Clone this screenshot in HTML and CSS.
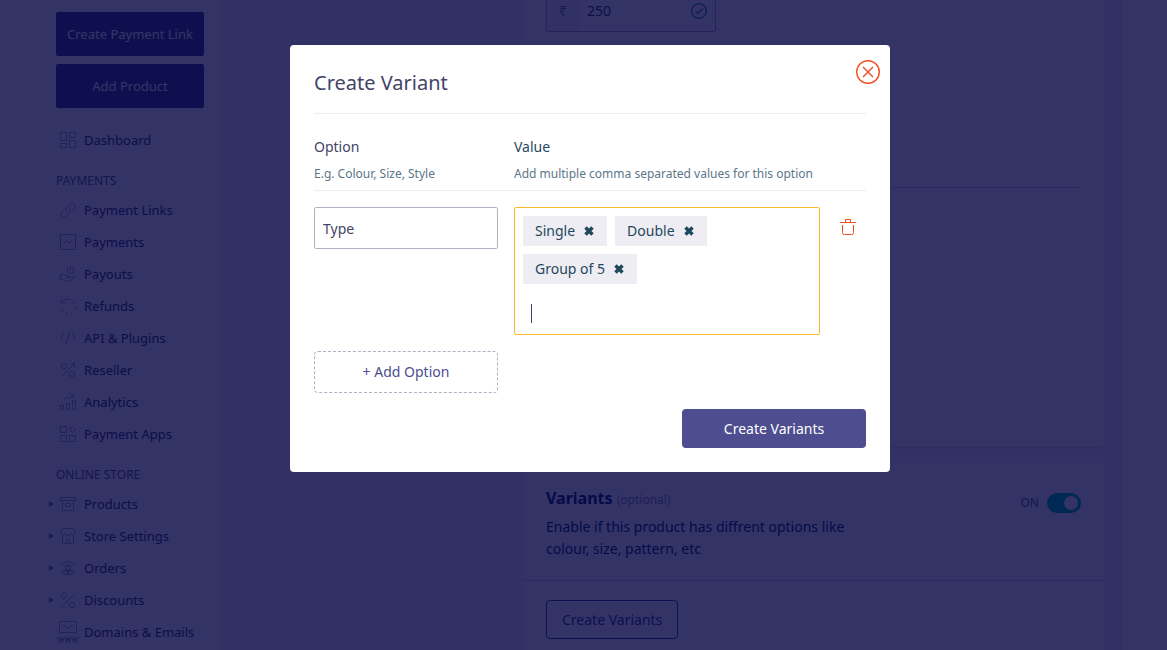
FILE: index.html
```html
<!DOCTYPE html>
<html lang="en">
<head>
<meta charset="utf-8">
<title>Create Variant</title>
<link rel="stylesheet" href="styles.css">
</head>
<body>
<div class="app">
  <aside class="sidebar">
    <div class="actions">
      <button class="action" type="button">Create Payment Link</button>
      <button class="action" type="button">Add Product</button>
    </div>
    <nav class="nav">
      <a class="item" href="#"><span class="caret"></span><svg class="icon" viewBox="0 0 16 16"><path d="M.5.5h6v8h-6zM9.500.5h6v5h-6zM.5 11.500h6v4h-6zM9.500 8.500h6v7h-6z"/></svg><span>Dashboard</span></a>
      <h2 class="group">PAYMENTS</h2>
      <a class="item" href="#"><span class="caret"></span><svg class="icon" viewBox="0 0 16 16"><path d="M6.500 9.500a3 3 0 0 1 0-4l3.800-3.800a2.800 2.800 0 0 1 4 4L11.500 8.500M9.500 6.500a3 3 0 0 1 0 4l-3.800 3.800a2.800 2.800 0 0 1-4-4L4.500 7.500"/></svg><span>Payment Links</span></a>
      <a class="item" href="#"><span class="caret"></span><svg class="icon" viewBox="0 0 16 16"><path d="M.5.5h15v15H.5zM3.500 10l3-3.500 3 2.500 3-3"/></svg><span>Payments</span></a>
      <a class="item" href="#"><span class="caret"></span><svg class="icon" viewBox="0 0 16 16"><circle cx="10.500" cy="4" r="3.500"/><path d="M10.500 2.500v3M.5 8.500v5h2c2 1.500 5 2.500 7 1.500l5.500-3.500c.8-1-.3-2-1.500-1.500L10 11.500H6h3.500c1-1 0-2-1-2H6c-1-1.200-3-1.500-5.500-1"/></svg><span>Payouts</span></a>
      <a class="item" href="#"><span class="caret"></span><svg class="icon" viewBox="0 0 16 16"><path d="M1 .8v4h4M1.500 4.500a7.300 7.300 0 0 1 10-2.500"/><path d="M13 3a7.300 7.300 0 1 1-12 5" stroke-dasharray="3 3"/></svg><span>Refunds</span></a>
      <a class="item" href="#"><span class="caret"></span><svg class="icon" viewBox="0 0 16 16"><path d="M4 4L.7 7.800 4 11.500M12 4l3.300 3.800L12 11.500M10 1.500l-4 13"/></svg><span>API &amp; Plugins</span></a>
      <a class="item" href="#"><span class="caret"></span><svg class="icon" viewBox="0 0 16 16"><circle cx="4" cy="4" r="2.800"/><circle cx="12" cy="12" r="2.800"/><path d="M1.500 14.500L14.500 1.500M10.500 1.500h4v4"/></svg><span>Reseller</span></a>
      <a class="item" href="#"><span class="caret"></span><svg class="icon" viewBox="0 0 16 16"><path d="M.5 11.500h3v4h-3zM6.500 9.500h3v6h-3zM12.500 6.500h3v9h-3zM3.500 5.500l3-2.500 2.500 2 4-4M10.500.7h3v3"/></svg><span>Analytics</span></a>
      <a class="item" href="#"><span class="caret"></span><svg class="icon" viewBox="0 0 16 16"><path d="M.5.5h6v6h-6zM.5 9.500h6v6h-6zM9.500 9.500h6v6h-6zM12.500.5l3 3-3 3-3-3z"/></svg><span>Payment Apps</span></a>
      <h2 class="group">ONLINE STORE</h2>
      <a class="item" href="#"><span class="caret open"></span><svg class="icon" viewBox="0 0 16 16"><path d="M.5 1.500h15v3H.5zM2.500 4.500v10h11v-10M5.500 7.500h5v3h-5z"/></svg><span>Products</span></a>
      <a class="item" href="#"><span class="caret open"></span><svg class="icon" viewBox="0 0 16 16"><path d="M3 .5h10l2.500 4c0 3-3.500 3.500-4 1-.8 2.500-6.200 2.500-7 0C4 8 .5 7.500.5 4.500zM2.500 7.500v8h11v-8M6.500 15.500v-4h3v4"/></svg><span>Store Settings</span></a>
      <a class="item" href="#"><span class="caret open"></span><svg class="icon" viewBox="0 0 16 16"><path d="M.5 5L8 1l7.500 4M5.500 5.500h5v4h-5zM2.500 10.500h5v4h-5zM8.500 10.500h5v4h-5zM8 5.500v2M5 10.500v2M11 10.500v2"/></svg><span>Orders</span></a>
      <a class="item" href="#"><span class="caret open"></span><svg class="icon" viewBox="0 0 16 16"><circle cx="4" cy="3.500" r="2.700"/><circle cx="12" cy="13" r="2.700"/><path d="M1.500 15L14.500 1.500"/></svg><span>Discounts</span></a>
      <a class="item" href="#"><span class="caret"></span><svg class="icon wide" viewBox="0 0 22 22"><path d="M2.500.5h17v11h-17zM5.500 3.500L11 7.500l5.500-4"/><path stroke-width="1.300" d="M.7 16l1.600 5 1.600-4.500L5.500 21l1.600-5M8 16l1.600 5 1.400-4.500 1.400 4.500L14 16M15 16l1.600 5 1.500-4.500 1.500 4.500 1.600-5"/></svg><span>Domains &amp; Emails</span></a>
    </nav>
  </aside>
  <main class="main">
    <div class="cards">
      <section class="card price-card">
        <div class="price">
          <span class="currency">₹</span>
          <input class="amount" type="text" value="250" aria-label="Price">
          <svg class="check" viewBox="0 0 16 16"><circle cx="8" cy="8" r="7.300"/><path d="M4.500 8l2.500 2.500 4.500-5"/></svg>
        </div>
        <hr class="rule">
      </section>
      <section class="card">
        <div class="variants">
          <div class="about">
            <h3 class="heading">Variants <span class="optional">(optional)</span></h3>
            <p class="text">Enable if this product has diffrent options like colour, size, pattern, etc</p>
          </div>
          <label class="switch">ON <input class="toggle" type="checkbox" checked></label>
        </div>
        <div class="foot"><button class="outline" type="button">Create Variants</button></div>
      </section>
    </div>
  </main>
  <div class="gutter"></div>
</div>
<div class="overlay">
  <div class="modal" role="dialog" aria-labelledby="title">
    <button class="close" type="button" aria-label="Close"><svg viewBox="0 0 24 24"><circle cx="12" cy="12" r="11.300"/><path d="M7 7l10 10M17 7L7 17"/></svg></button>
    <h1 class="title" id="title">Create Variant</h1>
    <div class="columns labels">
      <div><label class="label" for="option">Option</label><p class="hint">E.g. Colour, Size, Style</p></div>
      <div><label class="label value" for="value">Value</label><p class="hint">Add multiple comma separated values for this option</p></div>
    </div>
    <div class="columns fields">
      <input class="option" id="option" type="text" value="Type">
      <div class="tags">
        <span class="tag">Single <button class="remove" type="button" aria-label="Remove Single"><svg viewBox="0 0 12 12"><path d="M2.500 2.500l7 7M9.500 2.500l-7 7"/></svg></button></span>
        <span class="tag">Double <button class="remove" type="button" aria-label="Remove Double"><svg viewBox="0 0 12 12"><path d="M2.500 2.500l7 7M9.500 2.500l-7 7"/></svg></button></span>
        <span class="tag">Group of 5 <button class="remove" type="button" aria-label="Remove Group of 5"><svg viewBox="0 0 12 12"><path d="M2.500 2.500l7 7M9.500 2.500l-7 7"/></svg></button></span>
        <div class="entry"><span class="cursor"></span><input class="entry-input" id="value" type="text"></div>
      </div>
      <button class="trash" type="button" aria-label="Delete option"><svg viewBox="0 0 16 16"><path d="M0 3.500h16M5.500 3.500v-3h5v3M2.500 6v7.500q0 2 2 2h7q2 0 2-2V6"/></svg></button>
      <button class="add" type="button">+ Add Option</button>
    </div>
    <div class="submit-row"><button class="submit" type="button">Create Variants</button></div>
  </div>
</div>
</body>
</html>
```
FILE: styles.css
```css
* { box-sizing: border-box; }
body {
  margin: 0;
  overflow: hidden;
  background: #fff;
  font-family: "Noto Sans", sans-serif;
  font-size: 14px;
  line-height: 22px;
  color: #434368;
}
button, input { font: inherit; color: inherit; }
button { cursor: pointer; padding: 0; border: 0; background: none; }
input { border: 0; padding: 0; outline: 0; background: none; min-width: 0; }
h1, h2, h3, p { margin: 0; font-weight: 400; }
svg { display: block; fill: none; stroke: currentColor; }

.app { display: flex; height: 100vh; overflow: hidden; }
.sidebar { flex: none; width: 221px; padding: 12px 17px 0 48px; font-size: 13px; }
.actions { display: grid; gap: 8px; padding-left: 8px; margin-bottom: 16px; }
.action { height: 44px; border-radius: 2px; background: #4d4d8f; color: #fff; }
.item { display: flex; align-items: center; height: 32px; color: inherit; text-decoration: none; white-space: nowrap; }
.caret { width: 8px; flex: none; }
.caret.open::before { content: ""; display: block; width: 0; border: solid transparent; border-width: 3px 0 3px 5px; border-left-color: #8585a5; margin-left: 1px; }
.icon { flex: none; width: 16px; height: 16px; margin: 0 8px 0 4px; color: #a8a8c4; }
.icon.wide { width: 22px; height: 22px; margin: 0 5px 0 1px; }
.group { padding-top: 12px; padding-left: 8px; font-size: 12px; line-height: 26px; color: #69698c; }

.main { flex: 1; padding: 0 17px 0 301px; background: #f5f5fa; }
.cards { display: grid; gap: 16px; margin-top: -34px; }
.card { background: #fff; border-radius: 4px; box-shadow: 0 1px 1px #e6e6f0; }
.price-card { height: 481px; padding: 24px; }
.price { display: flex; align-items: center; width: 170px; height: 42px; border: 1px solid #b3b3c6; border-radius: 2px; }
.currency { width: 32px; line-height: 40px; text-align: center; background: #f5f5fa; color: #8585a5; }
.amount { flex: 1; padding-left: 8px; }
.check { width: 16px; height: 16px; margin-right: 8px; color: #4aa3a8; stroke-width: 1.400; }
.rule { margin: 155px 0 0; border: 0; border-top: 1px solid #d8d8e6; }
.variants { display: flex; justify-content: space-between; align-items: flex-start; padding: 24px 23px 20px 24px; border-bottom: 1px solid #dcdce8; color: #0f3a68; }
.about { width: 330px; }
.heading { font-size: 16px; font-weight: 700; margin-bottom: 5px; }
.optional { font-size: 12px; font-weight: 400; color: #a0a0b8; }
.switch { display: flex; align-items: center; gap: 8px; margin-top: 5px; font-size: 12px; color: #69698c; }
.toggle { appearance: none; display: flex; justify-content: flex-end; width: 34px; height: 20px; margin: 0; padding: 3px; border-radius: 10px; background: #00c8a8; }
.toggle::before { content: ""; width: 14px; height: 14px; border-radius: 7px; background: #fff; }
.foot { padding: 19px 24px; height: 90px; }
.outline { height: 39px; padding: 0 15px; border: 1px solid #4d4d8f; border-radius: 4px; color: #4d4d8f; }
.gutter { flex: none; width: 46px; border-left: 1px solid #e6e6f0; }

.overlay { position: fixed; inset: 0; display: flex; justify-content: center; align-items: flex-start; padding: 45px 0 0 13px; background: rgba(0, 0, 64, .8); }
.modal { position: relative; width: 600px; padding: 24px; border-radius: 4px; background: #fff; }
.close { position: absolute; top: 15px; right: 10px; width: 24px; height: 24px; color: #f24b1c; stroke-width: 1.400; }
.title { padding-bottom: 16px; border-bottom: 1px solid #ececf2; font-size: 20px; line-height: 28px; }
.columns { display: grid; grid-template-columns: 184px 1fr 30px; gap: 16px; align-items: start; }
.labels { padding: 22px 0 6px; border-bottom: 1px solid #ececf2; }
.label { display: block; margin-bottom: 6px; }
.value { color: #1f485c; }
.hint { font-size: 12px; line-height: 20px; color: #5b7688; white-space: nowrap; }
.fields { padding: 16px 0; }
.option { width: 100%; height: 42px; padding: 0 8px; border: 1px solid #b1b1c4; border-radius: 2px; }
.tags { display: flex; flex-wrap: wrap; gap: 8px; padding: 8px 8px 0; border: 1px solid #fdbb2c; border-radius: 2px; }
.tag { display: flex; align-items: center; gap: 8px; height: 30px; padding: 0 12px; background: #eeedf4; color: #1f485c; }
.remove svg { width: 12px; height: 12px; stroke-width: 3.500; }
.entry { display: flex; align-items: center; width: 100%; height: 42px; padding-left: 8px; }
.cursor { width: 1px; height: 19px; background: #434368; }
.entry-input { flex: 1; caret-color: transparent; }
.trash { width: 24px; padding: 12px 4px; color: #f24b1c; }
.trash svg { width: 16px; height: 16px; }
.add { height: 42px; border: 1px dashed #b1b1c4; border-radius: 4px; color: #4d4d8f; }
.submit-row { display: flex; justify-content: flex-end; }
.submit { width: 184px; height: 39px; border-radius: 4px; background: #4d4d8f; color: #fff; }
```
